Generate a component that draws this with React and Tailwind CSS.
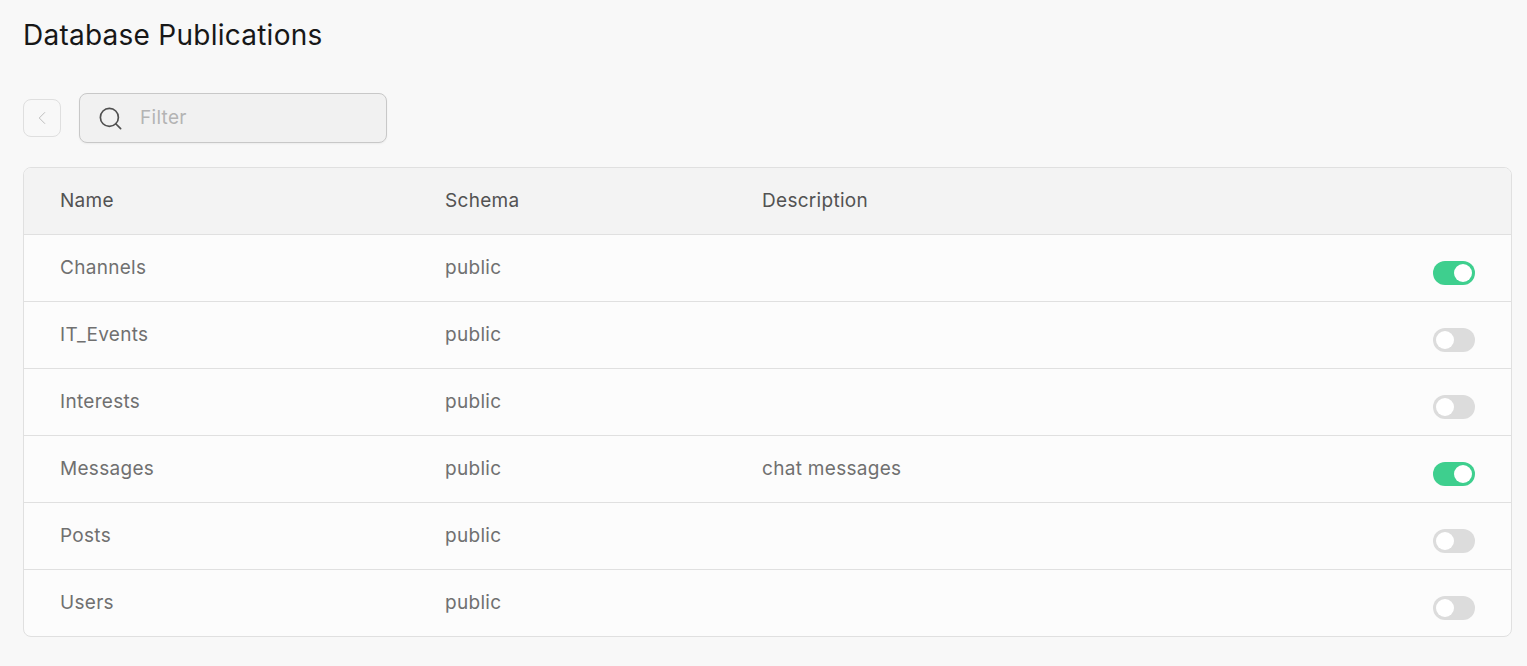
import React from 'react';
import { Search, ChevronLeft } from 'lucide-react';

const rows = [
  { name: 'Channels', schema: 'public', description: '', enabled: true },
  { name: 'IT_Events', schema: 'public', description: '', enabled: false },
  { name: 'Interests', schema: 'public', description: '', enabled: false },
  { name: 'Messages', schema: 'public', description: 'chat messages', enabled: true },
  { name: 'Posts', schema: 'public', description: '', enabled: false },
  { name: 'Users', schema: 'public', description: '', enabled: false },
];

const Toggle = ({ enabled }) => (
  <div className={`mt-[10px] flex h-6 w-[42px] items-center rounded-full px-[3px] ${enabled ? 'justify-end bg-[#3ecf8e]' : 'justify-start bg-[#dcdcdc]'}`}>
    <div className="h-[18px] w-[18px] rounded-full bg-white" />
  </div>
);

const App = () => {
  return (
    <div className="h-[666px] overflow-hidden bg-[#f8f8f8] px-[23px] pt-4 font-['Inter',sans-serif]">
      <h1 className="text-[28px] leading-[38px] tracking-[0.25px] text-[#171717]">Database Publications</h1>

      <div className="mt-[39px] flex items-center gap-[18px]">
        <button className="flex h-[38px] w-[38px] items-center justify-center rounded-lg border border-[#dfdfdf] bg-[#f8f8f8] text-[#b8b8b8]">
          <ChevronLeft className="h-[22px] w-[22px]" strokeWidth={1} />
        </button>
        <div className="flex h-[50px] w-[308px] items-center rounded-lg border border-[#c8c8c8] bg-[#f1f1f1] pl-[17px] shadow-xs">
          <Search className="h-[27px] w-[27px] text-[#505050]" strokeWidth={1.5} />
          <span className="ml-[16px] text-[19px] tracking-[0.3px] text-[#b4b4b4]">Filter</span>
        </div>
      </div>

      <div className="mt-6 h-[470px] w-[1489px] overflow-hidden rounded-lg border border-[#e0e0e0] bg-[#fcfcfc]">
        <div className="flex h-[67px] items-center border-b border-[#e0e0e0] bg-[#f3f3f3] pl-9 text-[19px] tracking-[0.3px] text-[#525252]">
          <div className="w-[385px]">Name</div>
          <div className="w-[317px]">Schema</div>
          <div>Description</div>
        </div>
        {rows.map((row) => (
          <div key={row.name} className="flex h-[67px] items-center border-b border-[#e0e0e0] pl-9 pr-9 text-[19px] tracking-[0.3px] text-[#707070] last:border-b-transparent">
            <div className="w-[385px]">{row.name}</div>
            <div className="w-[317px]">{row.schema}</div>
            <div className="flex-1">{row.description}</div>
            <Toggle enabled={row.enabled} />
          </div>
        ))}
      </div>
    </div>
  );
};

export default App;
